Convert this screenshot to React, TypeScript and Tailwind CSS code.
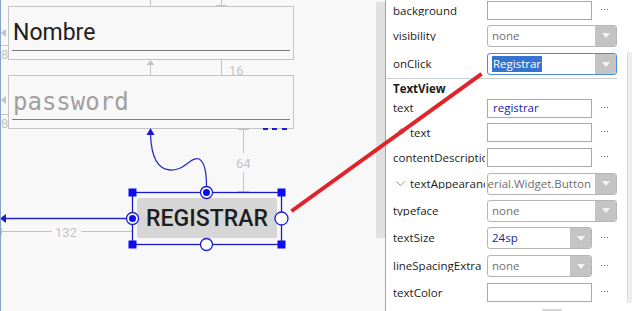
import { Wrench } from "lucide-react";
import clsx from "clsx";

const DownArrow = () => (
  <svg width="8" height="5" viewBox="0 0 8 5">
    <path d="M0 0h8L4 5z" fill="#f3f3f3" />
  </svg>
);

const More = () => (
  <div className="flex w-[25px] -translate-y-px justify-center gap-[2px]">
    <span className="h-px w-px bg-[#6e6e6e]" />
    <span className="h-px w-px bg-[#6e6e6e]" />
    <span className="h-px w-px bg-[#6e6e6e]" />
  </div>
);

const Field = ({ value }: { value?: string }) => (
  <div className="flex h-[19px] w-[105px] shrink-0 items-center border border-[#a8a8a8] bg-white pl-[5px] text-[#1c1ca6]">
    {value}
  </div>
);

const Combo = ({
  children,
  wide,
  focus,
  end,
}: {
  children?: React.ReactNode;
  wide?: boolean;
  focus?: boolean;
  end?: boolean;
}) => (
  <div
    className={clsx(
      "flex h-[22px] shrink-0 overflow-hidden rounded-[3px] border bg-white",
      wide ? "w-[130px]" : "w-[105px]",
      focus ? "border-[#4d8bdb]" : "border-[#b5b5b5]"
    )}
  >
    <div
      className={clsx(
        "flex min-w-0 flex-1 items-center overflow-hidden whitespace-nowrap",
        end ? "justify-end pr-[4px]" : "pl-[4px]"
      )}
    >
      {children}
    </div>
    <div className="flex w-[21px] items-center justify-center bg-[#c4c4c4]">
      <DownArrow />
    </div>
  </div>
);

const Row = ({
  h,
  label,
  children,
}: {
  h: string;
  label: React.ReactNode;
  children?: React.ReactNode;
}) => (
  <div className={clsx("flex items-center", h)}>
    <div className="flex w-[99px] shrink-0 items-center overflow-hidden whitespace-nowrap pl-[7px]">
      {label}
    </div>
    <div className="w-[2px] shrink-0" />
    {children}
  </div>
);

const None = () => <span className="text-[#6f6f6f]">none</span>;

const Canvas = () => (
  <div className="relative h-full w-[376px] shrink-0 overflow-hidden border-l border-[#86a2c6] bg-[#f8f8f8]">
    {/* EditText: Nombre */}
    <div className="absolute left-[7px] top-[6px] h-[54px] w-[286px] border border-[#c4c4c4]">
      <div className="pl-[4px] pt-[14px] font-['Roboto',sans-serif] text-[23px] leading-[24px] text-[#202020]">
        Nombre
      </div>
      <div className="mx-[3px] mt-[5px] h-px bg-[#7c7c7c]" />
    </div>

    {/* EditText: password */}
    <div className="absolute left-[7px] top-[75px] h-[54px] w-[286px] border border-[#c4c4c4]">
      <div className="pl-[4px] pt-[14px] font-['DejaVu_Sans_Mono',monospace] text-[24px] leading-[24px] text-[#a0a0a0]">
        password
      </div>
      <div className="mx-[3px] mt-[5px] h-px bg-[#7c7c7c]" />
    </div>

    {/* Button */}
    <div className="absolute left-[136px] top-[198px] flex h-[40px] w-[140px] items-center justify-center rounded-[2px] bg-[#d6d6d6] font-['Roboto',sans-serif] text-[23px] font-medium leading-none text-[#1e1e1e]">
      REGISTRAR
    </div>

    <svg
      className="pointer-events-none absolute -left-px top-0"
      width="376"
      height="311"
      viewBox="0 0 376 311"
    >
      <g stroke="#c3c3c3" strokeWidth="1" fill="none">
        <path d="M150.5 0v6M221.5 0v6M216 5.5h11" />
        <path d="M150.5 65v10M221.5 60v15" />
        <path d="M243.5 129v24M238 129.5h11M243.5 172v19M238 191.5h11" />
        <path d="M0 45.5h8M0 114.5h8" />
        <path d="M0 231.5h52M81 231.5h51M1.5 228v7" />
      </g>
      <g fill="#c3c3c3">
        <path d="M150.5 60l-4 5h8z" />
        <path d="M0.5 33l5.5-4v8z" />
        <path d="M0.5 100l5.5-4v8z" />
      </g>
      <g fill="#c4c4c4" fontFamily="Roboto, sans-serif" fontSize="13">
        <text x="229" y="74.5">16</text>
        <text x="236" y="167.5">64</text>
        <text x="55" y="237">132</text>
        <text x="1" y="59">8</text>
        <text x="1" y="128">8</text>
      </g>

      {/* constraint dots under password */}
      <g fill="#1a1ac8">
        <rect x="263" y="128" width="5" height="2" />
        <rect x="272" y="128" width="5" height="2" />
        <rect x="282" y="128" width="5" height="2" />
      </g>

      {/* left constraint arrow */}
      <path d="M5 218.5h122" stroke="#2626c4" strokeWidth="1.3" />
      <path d="M0 218.5l6-4.5v9z" fill="#1a1ad0" />

      {/* top constraint curve */}
      <path
        d="M150.5 134C151 150 155 169 170 170C185 171 191 156 199 159C205 162 206.5 176 206.5 186"
        stroke="#2a2ac4"
        strokeWidth="1.3"
        fill="none"
      />
      <path d="M150.5 128l-4 7h8z" fill="#1a1ad0" />

      {/* selection */}
      <rect x="132.5" y="192.5" width="149" height="52" stroke="#1c1cc4" strokeWidth="1.3" fill="none" />
      <g fill="#0c0cf0">
        <rect x="128.5" y="188.5" width="8" height="8" />
        <rect x="277.5" y="188.5" width="8" height="8" />
        <rect x="128.5" y="240.5" width="8" height="8" />
        <rect x="277.5" y="240.5" width="8" height="8" />
      </g>
      <g stroke="#1c1cd4" strokeWidth="1.3" fill="#ffffff">
        <circle cx="132.5" cy="218.5" r="6" />
        <circle cx="206.5" cy="192.5" r="6" />
        <circle cx="281.5" cy="218.5" r="6.5" />
        <circle cx="206.5" cy="244.5" r="6" />
      </g>
      <g fill="#0c0cf0">
        <circle cx="132.5" cy="218.5" r="3.5" />
        <circle cx="206.5" cy="192.5" r="3.5" />
      </g>
    </svg>
  </div>
);

const Properties = () => (
  <div className="flex h-full flex-1 bg-white font-['Open_Sans',sans-serif] text-[11.5px] leading-none text-[#1b1b1b]">
    <div className="flex w-[241px] flex-col">
      <Row h="h-[21px]" label="background">
        <Field />
        <More />
      </Row>
      <Row h="h-[29px]" label="visibility">
        <Combo wide>
          <None />
        </Combo>
      </Row>
      <Row h="h-[28px]" label="onClick">
        <Combo wide focus>
          <span className="bg-[#3574d0] px-px py-[2px] text-white">Registrar</span>
        </Combo>
      </Row>
      <div className="h-px w-[231px] bg-[#c7cdd5]" />
      <Row h="h-[17px] pt-[3px]" label={<span className="font-bold">TextView</span>} />
      <Row h="h-[24px]" label="text">
        <Field value="registrar" />
        <More />
      </Row>
      <Row
        h="h-[25px]"
        label={
          <>
            <Wrench size={10} className="mr-[5px] ml-[2px] shrink-0 text-[#8a8a8a]" />
            text
          </>
        }
      >
        <Field />
        <More />
      </Row>
      <Row h="h-[25px]" label="contentDescription">
        <Field />
        <More />
      </Row>
      <Row
        h="h-[27px]"
        label={
          <>
            <svg width="9" height="6" viewBox="0 0 9 6" className="ml-[3px] mr-[5px] shrink-0">
              <path d="M0.5 0.5l4 4 4-4" stroke="#9a9a9a" fill="none" />
            </svg>
            textAppearance
          </>
        }
      >
        <Combo wide end>
          <span className="text-[#6f6f6f]">
            @android:style/TextAppearance.Material.Widget.Button
          </span>
        </Combo>
      </Row>
      <Row h="h-[27px]" label="typeface">
        <Combo wide>
          <None />
        </Combo>
      </Row>
      <Row h="h-[28px]" label="textSize">
        <Combo>
          <span className="text-[#1c1ca6]">24sp</span>
        </Combo>
        <More />
      </Row>
      <Row h="h-[28px]" label="lineSpacingExtra">
        <Combo>
          <None />
        </Combo>
        <More />
      </Row>
      <Row h="h-[25px]" label="textColor">
        <Field />
        <More />
      </Row>
      <div className="ml-[156px] mt-[4px] h-[2px] w-[20px] bg-[#d6d6d6]" />
    </div>
    <div className="mt-[52px] h-[251px] w-[5px] border-l border-[#dcdcdc] bg-[#eeeeee]" />
  </div>
);

export default function App() {
  return (
    <div className="relative flex h-[311px] w-[632px] overflow-hidden bg-[#f8f8f8]">
      <Canvas />
      <div className="flex w-[9px] shrink-0 flex-col pt-[2px]">
        <div className="h-[236px] bg-[#e0e0e0]" />
      </div>
      <div className="w-px shrink-0 bg-[#8ea8c8]" />
      <Properties />
      <svg
        className="pointer-events-none absolute left-0 top-0"
        width="632"
        height="311"
        viewBox="0 0 632 311"
      >
        <path d="M293 210L480 75" stroke="#e2222b" strokeWidth="4" strokeLinecap="square" />
      </svg>
    </div>
  );
}
